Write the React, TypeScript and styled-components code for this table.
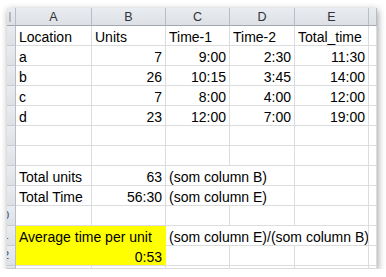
import React from 'react';
import styled, { createGlobalStyle } from 'styled-components';

type Cell = {
  text?: string;
  right?: boolean;
  span?: number;
  fill?: string;
  joinBelow?: boolean;
};

type Row = { num: number; cells: Cell[] };

const COLUMNS = ['A', 'B', 'C', 'D', 'E', ''];
const YELLOW = '#ffff00';

const r = (text: string): Cell => ({ text, right: true });
const l = (text: string): Cell => ({ text });
const blank = (): Cell => ({});
const emptyRow = (num: number): Row => ({ num, cells: COLUMNS.map(blank) });

const rows: Row[] = [
  { num: 1, cells: [l('Location'), l('Units'), l('Time-1'), l('Time-2'), l('Total_time'), blank()] },
  { num: 2, cells: [l('a'), r('7'), r('9:00'), r('2:30'), r('11:30'), blank()] },
  { num: 3, cells: [l('b'), r('26'), r('10:15'), r('3:45'), r('14:00'), blank()] },
  { num: 4, cells: [l('c'), r('7'), r('8:00'), r('4:00'), r('12:00'), blank()] },
  { num: 5, cells: [l('d'), r('23'), r('12:00'), r('7:00'), r('19:00'), blank()] },
  emptyRow(6),
  emptyRow(7),
  { num: 8, cells: [l('Total units'), r('63'), { text: '(som column B)', span: 2 }, blank(), blank()] },
  { num: 9, cells: [l('Total Time'), r('56:30'), { text: '(som column E)', span: 2 }, blank(), blank()] },
  emptyRow(10),
  {
    num: 11,
    cells: [
      { text: 'Average time per unit', span: 2, fill: YELLOW, joinBelow: true },
      { text: '(som column E)/(som column B)', span: 3 },
      blank(),
    ],
  },
  {
    num: 12,
    cells: [{ text: '0:53', span: 2, right: true, fill: YELLOW }, blank(), blank(), blank(), blank()],
  },
];

const GlobalStyle = createGlobalStyle`
  html, body {
    margin: 0;
    background: #ffffff;
  }
`;

const Page = styled.div`
  padding: 8px 0 0 7px;
`;

const Sheet = styled.div`
  display: grid;
  grid-template-columns: 9px 76px 74px 64px 65px 74px 8px;
  grid-template-rows: 18px repeat(12, 20px) 3px;
  width: 370px;
  height: 261px;
  overflow: hidden;
  background: #ffffff;
  box-shadow: 1px 2px 7px rgba(0, 0, 0, 0.38);
  font-family: 'Liberation Sans', Arial, sans-serif;
  font-size: 14px;
  color: #000000;
`;

const HeaderBase = styled.div`
  box-sizing: border-box;
  background: linear-gradient(#e9ecf0, #dde1e6);
  border-right: 1px solid #b9bec4;
  border-bottom: 1px solid #a3a8ae;
`;

const Corner = styled(HeaderBase)`
  display: flex;
  align-items: center;
  padding-left: 2px;
`;

const CornerMark = styled.span`
  width: 2px;
  height: 10px;
  background: #b3b8be;
`;

const ColHeader = styled(HeaderBase)`
  display: flex;
  align-items: center;
  justify-content: center;
  font-size: 12.5px;
  color: #2f3338;
  overflow: hidden;
`;

const RowHeader = styled(HeaderBase)`
  display: flex;
  align-items: flex-end;
  justify-content: flex-end;
  overflow: hidden;
  border-bottom-color: #c6cbd1;
  font-size: 11px;
  line-height: 15px;
  color: #34465e;
`;

const RowNumber = styled.span`
  flex-shrink: 0;
  width: 24px;
  text-align: center;
  padding-bottom: 2px;
`;

const GridCell = styled.div<{ $span: number; $right: boolean; $fill?: string; $joinBelow: boolean }>`
  grid-column: span ${(p) => p.$span};
  box-sizing: border-box;
  display: flex;
  align-items: flex-end;
  justify-content: ${(p) => (p.$right ? 'flex-end' : 'flex-start')};
  padding: 0 3px 0 3px;
  line-height: 16px;
  white-space: nowrap;
  overflow: hidden;
  background: ${(p) => p.$fill ?? '#ffffff'};
  border-right: 1px solid ${(p) => p.$fill ?? '#dadcdd'};
  border-bottom: 1px solid ${(p) => (p.$joinBelow && p.$fill ? p.$fill : '#dadcdd')};
`;

const App = () => {
  return (
    <>
      <GlobalStyle />
      <Page>
        <Sheet>
          <Corner>
            <CornerMark />
          </Corner>
          {COLUMNS.map((c, i) => (
            <ColHeader key={i}>{c}</ColHeader>
          ))}

          {rows.map((row) => (
            <React.Fragment key={row.num}>
              <RowHeader>
                <RowNumber>{row.num}</RowNumber>
              </RowHeader>
              {row.cells.map((cell, i) => (
                <GridCell
                  key={i}
                  $span={cell.span ?? 1}
                  $right={!!cell.right}
                  $fill={cell.fill}
                  $joinBelow={!!cell.joinBelow}
                >
                  {cell.text}
                </GridCell>
              ))}
            </React.Fragment>
          ))}

          <RowHeader />
          {COLUMNS.map((_, i) => (
            <GridCell key={i} $span={1} $right={false} $joinBelow={false} />
          ))}
        </Sheet>
      </Page>
    </>
  );
};

export default App;
